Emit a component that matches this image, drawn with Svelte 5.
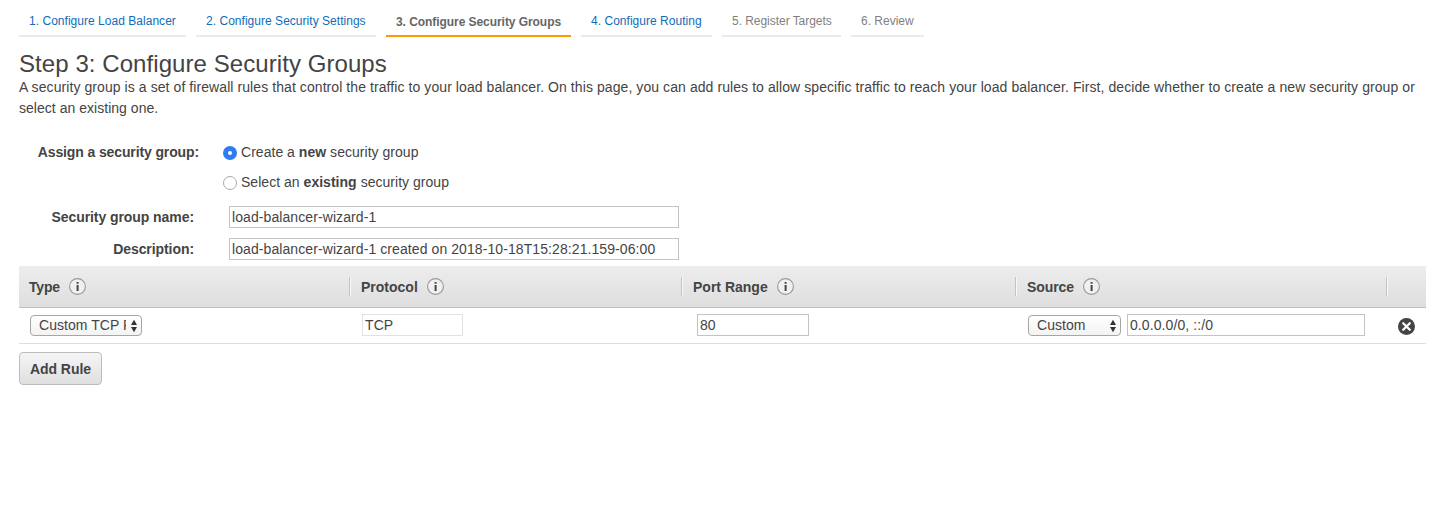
<script>
  const steps = [
    { label: '1. Configure Load Balancer', w: 167, kind: 'link', ls: 0.03 },
    { label: '2. Configure Security Settings', w: 180, kind: 'link', ls: 0.03 },
    { label: '3. Configure Security Groups', w: 185, kind: 'active', ls: -0.06 },
    { label: '4. Configure Routing', w: 131, kind: 'link', ls: 0.03 },
    { label: '5. Register Targets', w: 119, kind: 'todo', ls: -0.04 },
    { label: '6. Review', w: 73, kind: 'todo', ls: 0 }
  ];
  const columns = ['Type', 'Protocol', 'Port Range', 'Source'];
</script>

{#snippet info()}
  <svg class="info" width="17" height="17" viewBox="0 0 17 17">
    <circle cx="8.5" cy="8.5" r="7.9" fill="#f0f0f0" stroke="#999" stroke-width="1.1" />
    <path d="M7.6 4.1h2v1.7h-2zM7.6 6.9h2v6h-2z" fill="#444" />
  </svg>
{/snippet}

{#snippet arrows()}
  <svg class="arrows" width="8" height="14" viewBox="0 0 8 14">
    <path d="M4 0.8L7 6H1zM4 13.2L7 8H1z" fill="#333" />
  </svg>
{/snippet}

<main>
  <nav>
    {#each steps as s}
      <div class="step {s.kind}" style="width:{s.w}px;letter-spacing:{s.ls}px"><span>{s.label}</span></div>
    {/each}
  </nav>
  <h1><span>Step 3: Configure Security Groups</span></h1>
  <p>
    <span>A security group is a set of firewall rules that control the traffic to your load balancer. On this page, you can add rules to allow specific traffic to reach your load balancer. First, decide whether to create a new security group or</span><br /><span class="l2">select an existing one.</span>
  </p>

  <section class="assign">
    <b class="label">Assign a security group:</b>
    <div class="radios">
      <div class="radio"><i class="dot on"></i><span>Create a <b>new</b> security group</span></div>
      <div class="radio"><i class="dot"></i><span>Select an <b>existing</b> security group</span></div>
    </div>
  </section>
  <section class="fields">
    <div class="field"><b class="label">Security group name:</b><div class="input"><span>load-balancer-wizard-1</span></div></div>
    <div class="field"><b class="label">Description:</b><div class="input"><span>load-balancer-wizard-1 created on 2018-10-18T15:28:21.159-06:00</span></div></div>
  </section>

  <div class="grid head">
    {#each columns as c}
      <div class="th"><span>{c}</span>{@render info()}</div>
    {/each}
    <div class="th"></div>
  </div>
  <div class="grid row">
    <div class="td"><div class="select type"><span class="clip">Custom TCP Rule</span>{@render arrows()}</div></div>
    <div class="td"><div class="input proto"><span>TCP</span></div></div>
    <div class="td"><div class="input port"><span>80</span></div></div>
    <div class="td"><div class="select custom"><span class="clip">Custom</span>{@render arrows()}</div><div class="input source"><span>0.0.0.0/0, ::/0</span></div></div>
    <div class="td last">
      <svg width="17" height="17" viewBox="0 0 17 17">
        <circle cx="8.5" cy="8.5" r="8.5" fill="#444" />
        <path d="M5.2 5.2l6.6 6.6M11.8 5.2l-6.6 6.6" stroke="#fff" stroke-width="2.2" stroke-linecap="round" />
      </svg>
    </div>
  </div>
  <button><span>Add Rule</span></button>
</main>

<style>
  :global(body) { background: #fff; }
  main {
    box-sizing: border-box;
    width: 1440px;
    height: 526px;
    padding: 0 14px 0 19px;
    overflow: hidden;
    font: 14px/21px "Liberation Sans", Arial, sans-serif;
    color: #444;
  }
  nav { display: flex; gap: 10px; height: 37px; }
  .step {
    box-sizing: border-box;
    height: 37px;
    padding: 11px 0 0 10px;
    border-bottom: 2px solid #eaeaea;
    font-size: 12px;
    line-height: 20px;
    white-space: nowrap;
  }
  .link { color: #0f6db8; }
  .todo { color: #7f7f7f; }
  .active { color: #666; font-weight: bold; border-color: #f90; padding-top: 12px; }
  h1 { margin: 13px 0 0; font-size: 24px; line-height: 27px; font-weight: normal; white-space: nowrap; letter-spacing: 0.07px; }
  p { margin: 0; white-space: nowrap; height: 42px; letter-spacing: 0.078px; }
  .l2 { letter-spacing: 0.03px; }
  .assign { display: flex; padding-top: 23px; height: 60px; }
  .assign .label { width: 180px; text-align: right; letter-spacing: -0.12px; }
  .radios { margin-left: 24px; }
  .radio { display: flex; height: 30px; white-space: nowrap; letter-spacing: 0.03px; }
  .dot {
    box-sizing: border-box;
    width: 14px;
    height: 14px;
    margin: 4px 4px 0 0;
    border: 1px solid #aaa;
    border-radius: 50%;
    background: #fff;
  }
  .dot.on { border: 5px solid #2f7bf6; }
  .fields { display: flex; flex-direction: column; gap: 10px; padding-top: 4px; }
  .field { display: flex; height: 22px; }
  .field .label { width: 175px; text-align: right; line-height: 22px; margin-right: 35px; letter-spacing: -0.07px; }
  .input {
    box-sizing: border-box;
    width: 450px;
    height: 22px;
    border: 1px solid #c4c4c4;
    padding-left: 2px;
    line-height: 20px;
    background: #fff;
    white-space: nowrap;
    letter-spacing: 0.085px;
  }
  .grid { display: grid; box-sizing: border-box; grid-template-columns: 331px 332px 334px 371px 39px; }
  .head {
    height: 42px;
    margin-top: 6px;
    background: linear-gradient(#ededed, #dedede);
    border-bottom: 1px solid #bfbfbf;
  }
  .th { display: flex; align-items: flex-start; height: 19px; margin-top: 11px; padding-left: 10px; border-right: 1px solid #c4c4c4; box-shadow: 1px 0 #f8f8f8; font-weight: bold; }
  .th span { line-height: 21px; }
  .th + .th { padding-left: 11px; }
  .th:nth-child(1) span { letter-spacing: -0.2px; }
  .th:nth-child(4) span { letter-spacing: -0.08px; }
  .th:last-child { border: 0; box-shadow: none; }
  .info { margin: 1px 0 0 9px; flex: none; }
  .row { height: 36px; border-bottom: 1px solid #ddd; }
  .td { display: flex; align-items: flex-start; padding: 6px 0 0 12px; }
  .td:first-child { padding-left: 11px; }
  .td:nth-child(3) { padding-left: 15px; }
  .td.last { padding: 10px 0 0 11px; }
  .select {
    box-sizing: border-box;
    display: flex;
    align-items: center;
    height: 21px;
    margin-top: 1px;
    padding: 0 3px 0 8px;
    border: 1px solid #a6a6a6;
    border-radius: 4px;
    background: linear-gradient(#fff, #f3f3f3);
    line-height: 19px;
    letter-spacing: 0.05px;
  }
  .clip { flex: 1; overflow: hidden; white-space: nowrap; }
  .type { width: 112px; }
  .type .clip { flex: none; width: 87px; margin-right: 4px; }
  .custom { width: 93px; margin-right: 6px; }
  .proto { width: 101px; border-color: #e2e2e2; }
  .port { width: 112px; }
  .source { width: 238px; }
  button {
    display: block;
    box-sizing: border-box;
    width: 83px;
    height: 33px;
    margin: 8px 0 0;
    padding: 2px 0 0;
    border: 1px solid #bcbcbc;
    border-radius: 4px;
    background: linear-gradient(#f5f5f5, #dfdfdf);
    font: bold 14px/29px "Liberation Sans", Arial, sans-serif;
    letter-spacing: -0.05px;
    color: #444;
  }
</style>
